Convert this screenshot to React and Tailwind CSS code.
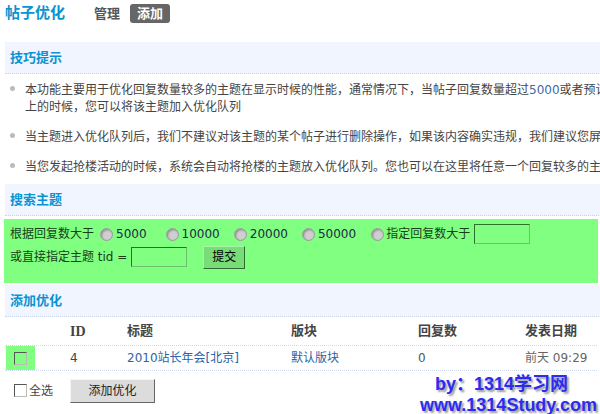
import React from "react";

const font = { fontFamily: '"DejaVu Sans", "Noto Sans CJK SC", sans-serif' };

function SectionHeader({ children }) {
  return (
    <div className="w-[600px] h-[32px] ml-[5px] bg-[#f0f5ff] border-b border-dotted border-[#c6d5e8] flex items-center pl-[5px]">
      <span className="text-[13px] font-bold text-[#0a93d1] leading-none">
        {children}
      </span>
    </div>
  );
}

function Radio() {
  return (
    <span className="inline-block w-[13px] h-[13px] rounded-full border border-[#9a9a9a] bg-[#cfcfcf] shadow-[inset_1px_1px_2px_#888]" />
  );
}

function Box({ className = "" }) {
  return (
    <span
      className={`inline-block w-[13px] h-[13px] border border-t-[#555] border-l-[#555] border-r-[#bbb] border-b-[#bbb] ${className}`}
    />
  );
}

export default function App() {
  return (
    <div
      className="relative w-[600px] h-[414px] overflow-hidden bg-white text-[12px] text-[#444]"
      style={font}
    >
      {/* title row */}
      <div className="h-[27px] flex items-center pl-[5px]">
        <span className="text-[15px] font-bold text-[#0a93d1]">帖子优化</span>
        <span className="ml-[29px] text-[13px] font-bold text-[#555]">管理</span>
        <span className="ml-[10px] h-[19px] px-[7px] flex items-center rounded-[3px] bg-[#666] text-[13px] font-bold text-white">
          添加
        </span>
      </div>

      <div className="mt-[15px]">
        <SectionHeader>技巧提示</SectionHeader>
      </div>

      <ul className="pt-[8px] pl-[10px] leading-[17px] whitespace-nowrap">
        <li className="flex mb-[13px]">
          <span className="w-[5px] h-[5px] rounded-full bg-[#bbb] mt-[4px] mr-[10px] shrink-0" />
          <div>
            <div>
              本功能主要用于优化回复数量较多的主题在显示时候的性能，通常情况下，当帖子回复数量超过
              <span className="text-[#3d6aa8]">5000</span>或者预计回复数量会超过5000以
            </div>
            <div>上的时候，您可以将该主题加入优化队列</div>
          </div>
        </li>
        <li className="flex mb-[13px]">
          <span className="w-[5px] h-[5px] rounded-full bg-[#bbb] mt-[4px] mr-[10px] shrink-0" />
          <div>
            当主题进入优化队列后，我们不建议对该主题的某个帖子进行删除操作，如果该内容确实违规，我们建议您屏蔽该帖子
          </div>
        </li>
        <li className="flex">
          <span className="w-[5px] h-[5px] rounded-full bg-[#bbb] mt-[4px] mr-[10px] shrink-0" />
          <div>
            当您发起抢楼活动的时候，系统会自动将抢楼的主题放入优化队列。您也可以在这里将任意一个回复较多的主题加入优化队列
          </div>
        </li>
      </ul>

      <div className="mt-[8px]">
        <SectionHeader>搜索主题</SectionHeader>
      </div>

      {/* search box */}
      <div className="mt-[3px] ml-[4px] w-[594px] h-[64px] bg-[#80ff80] pl-[6px] pt-[4px] text-[#173f17] whitespace-nowrap">
        <div className="h-[22px] flex items-center">
          <span>根据回复数大于</span>
          <span className="ml-[6px] flex"><Radio /></span>
          <span className="ml-[3px] text-[#1a2a4a]">5000</span>
          <span className="ml-[19px] flex"><Radio /></span>
          <span className="ml-[3px] text-[#1a2a4a]">10000</span>
          <span className="ml-[14px] flex"><Radio /></span>
          <span className="ml-[3px] text-[#1a2a4a]">20000</span>
          <span className="ml-[14px] flex"><Radio /></span>
          <span className="ml-[3px] text-[#1a2a4a]">50000</span>
          <span className="ml-[15px] flex"><Radio /></span>
          <span className="ml-[2px]">指定回复数大于</span>
          <span className="ml-[4px] w-[56px] h-[20px] border border-t-[#2d6f2d] border-l-[#2d6f2d] border-r-[#6fbf6f] border-b-[#6fbf6f]" />
        </div>
        <div className="h-[24px] flex items-center">
          <span>或直接指定主题 tid =</span>
          <span className="ml-[4px] w-[56px] h-[20px] border border-t-[#2d6f2d] border-l-[#2d6f2d] border-r-[#6fbf6f] border-b-[#6fbf6f]" />
          <span className="ml-[16px] w-[42px] h-[23px] flex items-center justify-center bg-[#78dc78] border border-t-[#a8f5a8] border-l-[#a8f5a8] border-r-[#2d6d2d] border-b-[#2d6d2d] text-black">
            提交
          </span>
        </div>
      </div>

      <div className="mt-[2px]">
        <SectionHeader>添加优化</SectionHeader>
      </div>

      {/* table */}
      <div className="ml-[5px] w-[592px] whitespace-nowrap">
        <div className="h-[29px] flex items-center border-b border-dotted border-[#cddcec] text-[13px] font-bold text-[#444]">
          <span className="w-[65px]" />
          <span className="w-[57px] font-['Liberation_Serif'] text-[14px]">ID</span>
          <span className="w-[164px]">标题</span>
          <span className="w-[127px]">版块</span>
          <span className="w-[107px]">回复数</span>
          <span>发表日期</span>
        </div>
        <div className="h-[25px] flex items-center border-b border-dotted border-[#cddcec]">
          <span className="w-[65px] h-full flex">
            <span className="ml-[1px] w-[29px] h-[24px] bg-[#80ff80] flex items-center justify-center">
              <Box />
            </span>
          </span>
          <span className="w-[57px]">4</span>
          <span className="w-[164px] text-[#2a64a6]">2010站长年会[北京]</span>
          <span className="w-[127px] text-[#2a64a6]">默认版块</span>
          <span className="w-[107px] text-[#555]">0</span>
          <span className="text-[#666]">前天 09:29</span>
        </div>
        <div className="mt-[7px] h-[25px] flex items-center">
          <Box className="ml-[9px] bg-white" />
          <span className="ml-[2px] text-[#444]">全选</span>
          <span className="ml-[17px] w-[85px] h-[24px] flex items-center justify-center bg-[#dcdcdc] border border-t-[#f4f4f4] border-l-[#f4f4f4] border-r-[#666] border-b-[#666] text-[#222]">
            添加优化
          </span>
        </div>
      </div>

      {/* watermark */}
      <div
        className="absolute left-[435px] top-[373px] text-[18px] font-bold text-[#2b2bf2] leading-[22px] [text-shadow:2px_2px_2px_#999]"
        style={{ fontFamily: '"Liberation Sans", "Noto Sans CJK SC", sans-serif' }}
      >
        by：1314学习网
      </div>
      <div
        className="absolute left-[420px] top-[394px] text-[18px] font-bold text-[#2b2bf2] leading-[22px] [text-shadow:2px_2px_2px_#999]"
        style={{ fontFamily: '"Liberation Sans", sans-serif' }}
      >
        www.1314Study.com
      </div>
    </div>
  );
}
